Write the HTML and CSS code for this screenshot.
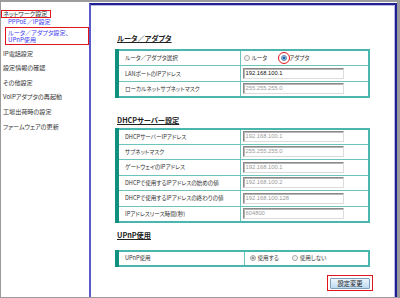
FILE: index.html
```html
<!DOCTYPE html>
<html lang="ja">
<head>
<meta charset="utf-8">
<link rel="stylesheet" href="styles.css">
</head>
<body>
<div class="page">
  <nav class="menu">
    <div class="mark-top">ネットワーク設定</div>
    <div class="sub">PPPoE／IP設定</div>
    <div class="mark-sub">
      <div class="sub">ルータ／アダプタ設定、</div>
      <div class="sub">UPnP使用</div>
    </div>
    <ul class="items">
      <li>IP電話設定</li>
      <li>設定情報の確認</li>
      <li>その他設定</li>
      <li>VoIPアダプタの再起動</li>
      <li>工場出荷時の設定</li>
      <li>ファームウェアの更新</li>
    </ul>
  </nav>
  <main class="frame">
    <h2 class="heading h-router">ルータ／アダプタ</h2>
    <table class="grid g16">
      <tr>
        <td class="label">ルータ／アダプタ選択</td>
        <td class="value">
          <div class="radios">
            <span class="opt"><span class="radio"></span>ルータ</span>
            <span class="opt"><span class="radio on"><span class="ring"></span></span>アダプタ</span>
          </div>
        </td>
      </tr>
      <tr>
        <td class="label">LANポートのIPアドレス</td>
        <td class="value"><span class="input">192.168.100.1</span></td>
      </tr>
      <tr>
        <td class="label">ローカルネットサブネットマスク</td>
        <td class="value"><span class="input off">255.255.255.0</span></td>
      </tr>
    </table>

    <h2 class="heading h-dhcp">DHCPサーバー設定</h2>
    <table class="grid g15">
      <tr><td class="label">DHCPサーバーIPアドレス</td><td class="value"><span class="input off">192.168.100.1</span></td></tr>
      <tr><td class="label">サブネットマスク</td><td class="value"><span class="input off">255.255.255.0</span></td></tr>
      <tr><td class="label">ゲートウェイのIPアドレス</td><td class="value"><span class="input off">192.168.100.1</span></td></tr>
      <tr><td class="label">DHCPで使用するIPアドレスの始めの値</td><td class="value"><span class="input off">192.168.100.2</span></td></tr>
      <tr><td class="label">DHCPで使用するIPアドレスの終わりの値</td><td class="value"><span class="input off">192.168.100.128</span></td></tr>
      <tr><td class="label">IPアドレスリース時間(秒)</td><td class="value"><span class="input off">604800</span></td></tr>
    </table>

    <h2 class="heading h-upnp">UPnP使用</h2>
    <table class="grid g16 wide">
      <tr>
        <td class="label">UPnP使用</td>
        <td class="value">
          <div class="radios upnp">
            <span class="opt"><span class="radio dis"></span>使用する</span>
            <span class="opt"><span class="radio"></span>使用しない</span>
          </div>
        </td>
      </tr>
    </table>

    <div class="actions">
      <span class="mark-btn"><button class="btn">設定変更</button></span>
    </div>
  </main>
</div>
</body>
</html>
```

FILE: styles.css
```css
* { box-sizing: border-box; }
html, body { margin: 0; padding: 0; background: #fff; }
body {
  font-family: "Noto Sans CJK JP", "Noto Sans", sans-serif;
  font-feature-settings: "palt";
  color: #333;
}
.page {
  width: 400px;
  height: 298px;
  border-style: solid;
  border-color: #9b9b9b;
  border-width: 2px 3px 1px 1px;
  display: flex;
  overflow: hidden;
}

/* ---------- menu ---------- */
.menu {
  width: 88px;
  flex: none;
  padding-top: 8px;
  display: flex;
  flex-direction: column;
  font-size: 6.1px;
}
.mark-top {
  align-self: flex-start;
  border: 1px solid #e0161c;
  line-height: 6px;
  padding: 0 3px 0 1px;
  color: #333;
}
.sub {
  color: #3b3bf0;
  line-height: 8px;
  padding-left: 7px;
}
.mark-sub {
  margin: 1px 0 0 4px;
  border: 1px solid #e0161c;
  padding: 0.5px 0 0;
}
.mark-sub .sub {
  line-height: 7.5px;
  padding-left: 2px;
}
.items {
  list-style: none;
  margin: 2.2px 0 0;
  padding: 0 0 0 2px;
}
.items li {
  line-height: 14.6px;
  color: #333;
}

/* ---------- frame ---------- */
.frame {
  flex: 1;
  margin-top: 1px;
  border-top: 2px solid #23238f;
  border-left: 2px solid #5a5acb;
  border-right: 2px solid #1d1d96;
  box-shadow: inset -1px 0 0 #b8b8e6, inset 0 1px 0 #b8b8e6;
  padding: 0 25px 0 24px;
  display: flex;
  flex-direction: column;
}
.heading {
  margin: 0;
  padding-left: 2px;
  font-size: 7.2px;
  font-weight: bold;
  line-height: 9px;
  color: #222;
  text-decoration: underline;
  text-underline-offset: 1px;
}
.h-router { margin-top: 28.5px; }
.h-dhcp { margin-top: 17.5px; }
.h-upnp { margin-top: 8px; }

.grid {
  border-collapse: collapse;
  width: 255px;
  border: 2px solid #4ab7ae;
  border-left: 4px solid #10907f;
  font-size: 5.6px;
}
.h-router + .grid { margin-top: 6.5px; }
.h-dhcp + .grid { margin-top: 3px; }
.h-upnp + .grid { margin-top: 10px; }

.grid td {
  border-bottom: 1px solid #6cc5bd;
  padding: 0;
  vertical-align: middle;
}
.grid tr:last-child td { border-bottom: none; }
.g16 td { height: 15.7px; }
.g15 td { height: 15.5px; }
.label {
  width: 123px;
  padding-left: 6px !important;
  border-right: 1px solid #6cc5bd;
  color: #333;
  white-space: nowrap;
}
.wide .label { width: 127px; }
.value { padding-left: 2px !important; }

.input {
  display: block;
  width: 101px;
  height: 11px;
  border: 1px solid;
  border-color: #8a8a8a #dcdcdc #dcdcdc #8a8a8a;
  box-shadow: inset 1px 1px 0 #b5b5b5;
  padding-left: 2px;
  line-height: 9px;
  font-size: 5.8px;
  color: #111;
  background: #fff;
  font-family: "Liberation Sans", sans-serif;
}
.input.off { color: #9a9a9a; }

.radios {
  display: flex;
  align-items: center;
  gap: 14px;
  padding-left: 1px;
  color: #333;
}
.radios.upnp { gap: 13px; padding-left: 3px; }
.opt {
  display: flex;
  align-items: center;
  gap: 2px;
}
.radio {
  position: relative;
  width: 6px;
  height: 6px;
  border-radius: 50%;
  border: 1px solid #a9a9a9;
  background: #f4f4f4;
}
.radio.on {
  border-color: #6e8fb3;
  background: radial-gradient(circle, #1d5fa8 0 1.4px, #8fb6de 1.6px);
}
.radio.dis {
  background: radial-gradient(circle, #9a9a9a 0 1.3px, #dcdcdc 1.6px);
}
.ring {
  position: absolute;
  left: -4px;
  top: -4px;
  width: 12px;
  height: 12px;
  border: 1px solid #e0161c;
  border-radius: 50%;
}

.actions {
  display: flex;
  justify-content: flex-end;
  margin-top: 8px;
  margin-right: -3px;
}
.mark-btn {
  border: 1.5px solid #e0161c;
  padding: 2px 2px 1px 2px;
  display: flex;
}
.btn {
  width: 40px;
  height: 11px;
  padding: 0;
  margin: 0;
  border: 1px solid #7d9fbd;
  border-radius: 1px;
  background: linear-gradient(#eef6fd, #bcd9f0);
  font-family: "Noto Sans CJK JP", sans-serif;
  font-size: 6.3px;
  line-height: 9px;
  color: #222;
}
```
